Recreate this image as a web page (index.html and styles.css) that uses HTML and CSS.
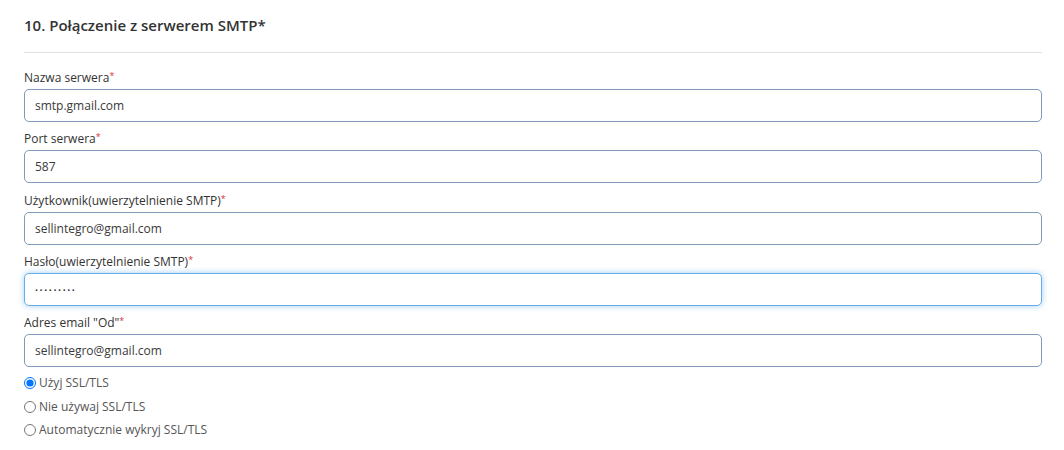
FILE: index.html
```html
<!DOCTYPE html>
<html lang="pl">
<head>
  <meta charset="UTF-8" />
  <title>Połączenie z serwerem SMTP</title>
  <link rel="stylesheet" href="styles.css">
</head>
<body>

<div class="section">
  <h3 class="section-title">10. Połączenie z serwerem SMTP*</h3>

  <div class="field">
    <label for="smtp-host">Nazwa serwera<span class="req">*</span></label>
    <input type="text" id="smtp-host" value="smtp.gmail.com" />
  </div>

  <div class="field">
    <label for="smtp-port">Port serwera<span class="req">*</span></label>
    <input type="text" id="smtp-port" value="587" />
  </div>

  <div class="field">
    <label for="smtp-user">Użytkownik(uwierzytelnienie SMTP)<span class="req">*</span></label>
    <input type="text" id="smtp-user" value="sellintegro@gmail.com" />
  </div>

  <div class="field">
    <label for="smtp-pass">Hasło(uwierzytelnienie SMTP)<span class="req">*</span></label>
    <input type="password" id="smtp-pass" class="focused" value="123456789" />
  </div>

  <div class="field">
    <label for="smtp-from">Adres email "Od"<span class="req">*</span></label>
    <input type="text" id="smtp-from" value="sellintegro@gmail.com" />
  </div>

  <div class="radios">
    <label class="radio"><input type="radio" name="ssl" checked /> Użyj SSL/TLS</label>
    <label class="radio"><input type="radio" name="ssl" /> Nie używaj SSL/TLS</label>
    <label class="radio"><input type="radio" name="ssl" /> Automatycznie wykryj SSL/TLS</label>
  </div>
</div>

</body>
</html>
```

FILE: styles.css
```css
body {
  font-family: 'Open Sans', 'Liberation Sans', sans-serif;
  background: #fff;
  color: #333;
  margin: 0;
  padding: 0 22px 0 24px;
}

.section-title {
  margin: 0;
  padding: 15px 0 17px;
  font-size: 15px;
  font-weight: 600;
  color: #333;
  border-bottom: 1px solid #dde1e5;
}

.field {
  margin-top: 9.25px;
}

.section-title + .field {
  margin-top: 17px;
}

.field label {
  display: block;
  font-size: 12px;
  line-height: 16px;
  margin-bottom: 3px;
  color: #333;
}

.req {
  color: #e0303a;
  font-size: 9px;
  vertical-align: top;
  line-height: 12px;
}

.field input {
  display: block;
  box-sizing: border-box;
  width: 100%;
  height: 33px;
  padding: 0 10px;
  border: 1px solid #7f9bb8;
  border-radius: 5px;
  font-family: inherit;
  font-size: 12px;
  color: #3a3a3a;
  background: #fff;
  outline: none;
}

.field input[type="password"] {
  font-size: 8px;
  letter-spacing: 1.6px;
}

.field input.focused {
  border-color: #66aee9;
  box-shadow: 0 0 6px rgba(102, 174, 233, 0.6);
}

.radios {
  margin-top: 8px;
}

.radio {
  display: flex;
  align-items: center;
  font-size: 12px;
  line-height: 16px;
  margin-bottom: 7.5px;
  color: #555;
}

.radio input {
  margin: 0 3px 0 0;
  width: 12px;
  height: 12px;
}
```
